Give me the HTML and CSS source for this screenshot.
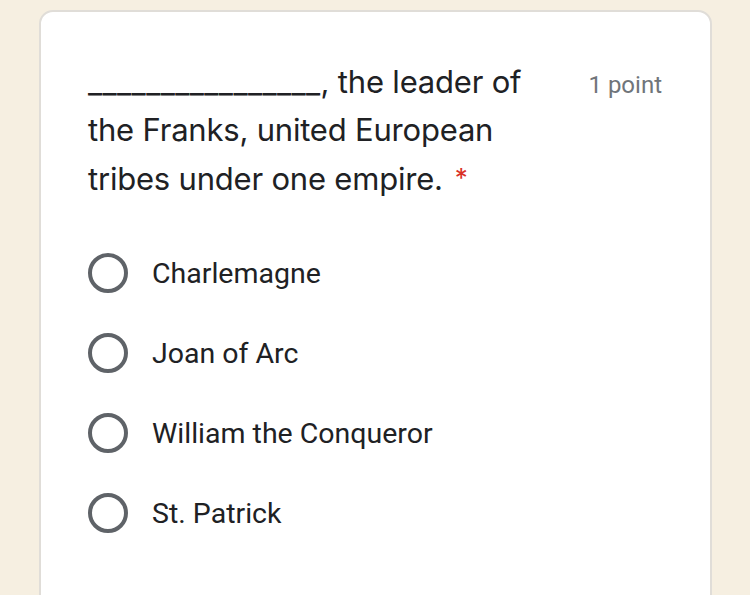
FILE: index.html
```html
<!DOCTYPE html>
<html>
<head>
<meta charset="utf-8">
<link rel="stylesheet" href="styles.css">
</head>
<body>
<div class="card">
  <div class="head">
    <div class="title"><span class="blank">________________</span>, the leader of the Franks, united European tribes under one empire.<span class="req">*</span></div>
    <div class="points">1 point</div>
  </div>
  <div class="options">
    <div class="opt"><span class="radio"></span><span class="label">Charlemagne</span></div>
    <div class="opt"><span class="radio"></span><span class="label">Joan of Arc</span></div>
    <div class="opt"><span class="radio"></span><span class="label">William the Conqueror</span></div>
    <div class="opt"><span class="radio"></span><span class="label">St. Patrick</span></div>
  </div>
</div>
</body>
</html>
```
FILE: styles.css
```css
html, body { margin: 0; padding: 0; }
body {
  background: #f6efe1;
  width: 750px;
  height: 595px;
  overflow: hidden;
}
.card {
  margin: 10px 0 0 39px;
  width: 673px;
  height: 620px;
  box-sizing: border-box;
  background: #fff;
  border: 2px solid #e0ddd8;
  border-radius: 14px;
  padding: 46px 48px 0 47px;
}
.head {
  display: flex;
  justify-content: space-between;
  align-items: flex-start;
}
.title {
  width: 445px;
  font-family: Inter, sans-serif;
  font-size: 31px;
  line-height: 48px;
  color: #202124;
  letter-spacing: -0.2px;
}
.blank { letter-spacing: 0.4px; }
.req { color: #d93025; margin-left: 12px; font-size: 26px; vertical-align: 3px; }
.points {
  font-family: Roboto, sans-serif;
  font-size: 24px;
  line-height: 48px;
  color: #70757a;
  margin-top: 3px;
}
.options {
  margin-top: 50px;
  display: flex;
  flex-direction: column;
  gap: 40px;
}
.opt {
  display: flex;
  align-items: center;
  height: 40px;
}
.radio {
  width: 32px;
  height: 32px;
  border: 4px solid #5f6368;
  border-radius: 50%;
  flex: none;
}
.label {
  margin-left: 24px;
  font-family: Roboto, sans-serif;
  font-size: 28.5px;
  color: #202124;
}
```
